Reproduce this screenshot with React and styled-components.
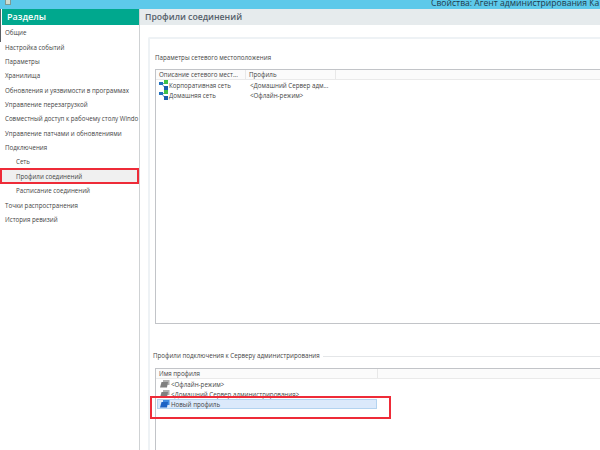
import React from "react";
import styled, { createGlobalStyle } from "styled-components";

const GlobalStyle = createGlobalStyle`
  html, body { margin: 0; padding: 0; background: #fff; }
  body { font-family: "Open Sans", "Noto Sans", sans-serif; color: #333; overflow: hidden; }
`;

const Page = styled.div`
  position: relative;
  width: 600px;
  height: 450px;
  overflow: hidden;
  display: flex;
  flex-direction: column;
`;

const TitleBar = styled.div`
  height: 9px;
  flex: none;
  background: #5dc9ea;
  display: flex;
  justify-content: space-between;
  overflow: hidden;
  white-space: nowrap;
`;

const AppIcon = styled.div`
  width: 6px;
  height: 5px;
  margin-left: 5px;
  background: #cfdcd0;
  border: 1px solid #7e9a92;
  border-top: none;
  box-sizing: border-box;
`;

const TitleText = styled.div`
  font-size: 8.6px;
  line-height: 7px;
  color: #1f3a4c;
  width: 169px;
`;

const Body = styled.div`
  flex: 1;
  display: flex;
  min-height: 0;
`;

const Sidebar = styled.div`
  position: relative;
  width: 140px;
  flex: none;
  padding-left: 2px;
  box-sizing: border-box;
  border-right: 1px solid #cfd2d4;
  overflow: hidden;

  &::before {
    content: "";
    position: absolute;
    left: 0;
    top: 0;
    width: 1px;
    height: 33px;
    background: #5a5f63;
  }
`;

const SidebarHead = styled.div`
  height: 16px;
  background: #00a88e;
  color: #fff;
  font-size: 9px;
  font-weight: 600;
  line-height: 16px;
  padding-left: 5px;
`;

const NavList = styled.div`
  padding-top: 1.4px;
`;

const NavItem = styled.div`
  height: 14.35px;
  line-height: 14.35px;
  font-size: 6.2px;
  white-space: nowrap;
  padding-left: ${(p) => (p.$sub ? 14 : 3)}px;
  background: ${(p) => (p.$active ? "#f0f0f0" : "transparent")};
  color: #444;
`;

const Main = styled.div`
  flex: 1;
  display: flex;
  flex-direction: column;
  min-width: 0;
`;

const MainHead = styled.div`
  height: 16px;
  flex: none;
  background: #e6ebed;
  color: #55606a;
  font-size: 8.7px;
  font-weight: 600;
  line-height: 16px;
  padding-left: 5px;
`;

const Panel = styled.div`
  flex: 1;
  margin: 12px 0 0 8px;
  border-top: 2px solid #eef2f5;
  border-left: 2px solid #eef2f5;
  border-top-left-radius: 2px;
  padding: 14px 0 0 5px;
  display: flex;
  flex-direction: column;
`;

const GroupLabel = styled.div`
  font-size: 6.2px;
  line-height: 10px;
  height: 10px;
  color: #444;
  white-space: nowrap;
  display: flex;
  align-items: center;
  gap: 3px;
  margin: ${(p) => (p.$line ? "27px 0 0 -2px" : "0")};

  &::after {
    content: "";
    flex: ${(p) => (p.$line ? 1 : 0)};
    height: 1px;
    background: #e4e6e8;
  }
`;

const ListBox = styled.div`
  margin-top: ${(p) => (p.$grow ? 7 : 6)}px;
  border: 1px solid #c2c4c8;
  border-right: none;
  height: ${(p) => (p.$grow ? "auto" : `${p.$height}px`)};
  flex: ${(p) => (p.$grow ? 1 : "none")};
  ${(p) => (p.$grow ? "border-bottom: none;" : "")}
  background: #fff;
`;

const HeaderRow = styled.div`
  display: flex;
  height: 9px;
  background: #fbfbfb;
  border-bottom: 1px solid #eaeaea;
`;

const HeaderCell = styled.div`
  width: ${(p) => p.$width}px;
  flex: none;
  box-sizing: border-box;
  padding-left: 3px;
  font-size: 6.2px;
  line-height: 9px;
  border-right: 1px solid #e8e8e8;
  white-space: nowrap;
  overflow: hidden;
  color: #444;
`;

const Row = styled.div`
  display: flex;
  align-items: center;
  height: 10px;
  font-size: 6.2px;
  color: #444;
  white-space: nowrap;
`;

const NameCell = styled.div`
  width: 94px;
  flex: none;
  padding-left: 3px;
  box-sizing: border-box;
  display: flex;
  align-items: center;
`;

const ProfileRow = styled.div`
  display: flex;
  align-items: center;
  height: 10px;
  padding-left: 3px;
  box-sizing: border-box;
  width: ${(p) => (p.$selected ? "220px" : "auto")};
  margin-left: 1px;
  font-size: 6.2px;
  color: #444;
  white-space: nowrap;
  background: ${(p) => (p.$selected ? "#dbe9fb" : "transparent")};
  border: ${(p) => (p.$selected ? "1px solid #b3d3f0" : "none")};
  ${(p) => (p.$selected ? "padding-left: 2px;" : "")}
`;

const Highlight = styled.div`
  position: absolute;
  border: 2px solid #ee2b38;
  box-sizing: border-box;
  left: ${(p) => p.$x}px;
  top: ${(p) => p.$y}px;
  width: ${(p) => p.$w}px;
  height: ${(p) => p.$h}px;
`;

const NetworkIcon = () => (
  <svg width="10" height="10" viewBox="0 0 10 10" style={{ flex: "none" }}>
    <path d="M3 3.5 H5.5 M3 4 L6 8" stroke="#2a6f9e" strokeWidth="0.7" fill="none" />
    <rect x="0" y="2" width="4" height="3" fill="#1f6fbf" />
    <rect x="5" y="0" width="4" height="4" fill="#41c14a" />
    <rect x="5" y="6" width="4" height="4" fill="#1b5fae" />
  </svg>
);

const ProfileIcon = ({ color, back }) => (
  <svg width="10" height="8" viewBox="0 0 10 8" style={{ flex: "none", marginRight: 1 }}>
    <path d="M3 0 H9.5 V5 H3 Z" fill={back} />
    <path d="M1.5 2 H8 L7 7.5 H0 Z" fill={color} />
  </svg>
);

const navItems = [
  { label: "Общие" },
  { label: "Настройка событий" },
  { label: "Параметры" },
  { label: "Хранилища" },
  { label: "Обновления и уязвимости в программах" },
  { label: "Управление перезагрузкой" },
  { label: "Совместный доступ к рабочему столу Windo" },
  { label: "Управление патчами и обновлениями" },
  { label: "Подключения" },
  { label: "Сеть", sub: true },
  { label: "Профили соединений", sub: true, active: true },
  { label: "Расписание соединений", sub: true },
  { label: "Точки распространения" },
  { label: "История ревизий" },
];

const networks = [
  { name: "Корпоративная сеть", profile: "<Домашний Сервер адм..." },
  { name: "Домашняя сеть", profile: "<Офлайн-режим>" },
];

const profiles = [
  { name: "<Офлайн-режим>", color: "#808080", back: "#b0b0b0" },
  { name: "<Домашний Сервер администрирования>", color: "#808080", back: "#b0b0b0" },
  { name: "Новый профиль", color: "#1c62c4", back: "#3f8ae0", selected: true },
];

export default function App() {
  return (
    <Page>
      <GlobalStyle />
      <TitleBar>
        <AppIcon />
        <TitleText>Свойства: Агент администрирования Ка</TitleText>
      </TitleBar>
      <Body>
        <Sidebar>
          <SidebarHead>Разделы</SidebarHead>
          <NavList>
            {navItems.map((item) => (
              <NavItem key={item.label} $sub={item.sub} $active={item.active}>
                {item.label}
              </NavItem>
            ))}
          </NavList>
        </Sidebar>
        <Main>
          <MainHead>Профили соединений</MainHead>
          <Panel>
            <GroupLabel>Параметры сетевого местоположения</GroupLabel>
            <ListBox $height={253}>
              <HeaderRow>
                <HeaderCell $width={90}>Описание сетевого мест...</HeaderCell>
                <HeaderCell $width={90}>Профиль</HeaderCell>
              </HeaderRow>
              {networks.map((n) => (
                <Row key={n.name}>
                  <NameCell>
                    <NetworkIcon />
                    {n.name}
                  </NameCell>
                  {n.profile}
                </Row>
              ))}
            </ListBox>
            <GroupLabel $line>Профили подключения к Серверу администрирования</GroupLabel>
            <ListBox $grow>
              <HeaderRow>
                <HeaderCell $width={222}>Имя профиля</HeaderCell>
              </HeaderRow>
              {profiles.map((p) => (
                <ProfileRow key={p.name} $selected={p.selected}>
                  <ProfileIcon color={p.color} back={p.back} />
                  {p.name}
                </ProfileRow>
              ))}
            </ListBox>
          </Panel>
        </Main>
      </Body>
      <Highlight $x={0} $y={168} $w={139} $h={16} />
      <Highlight $x={150} $y={396} $w={241} $h={23} />
    </Page>
  );
}
